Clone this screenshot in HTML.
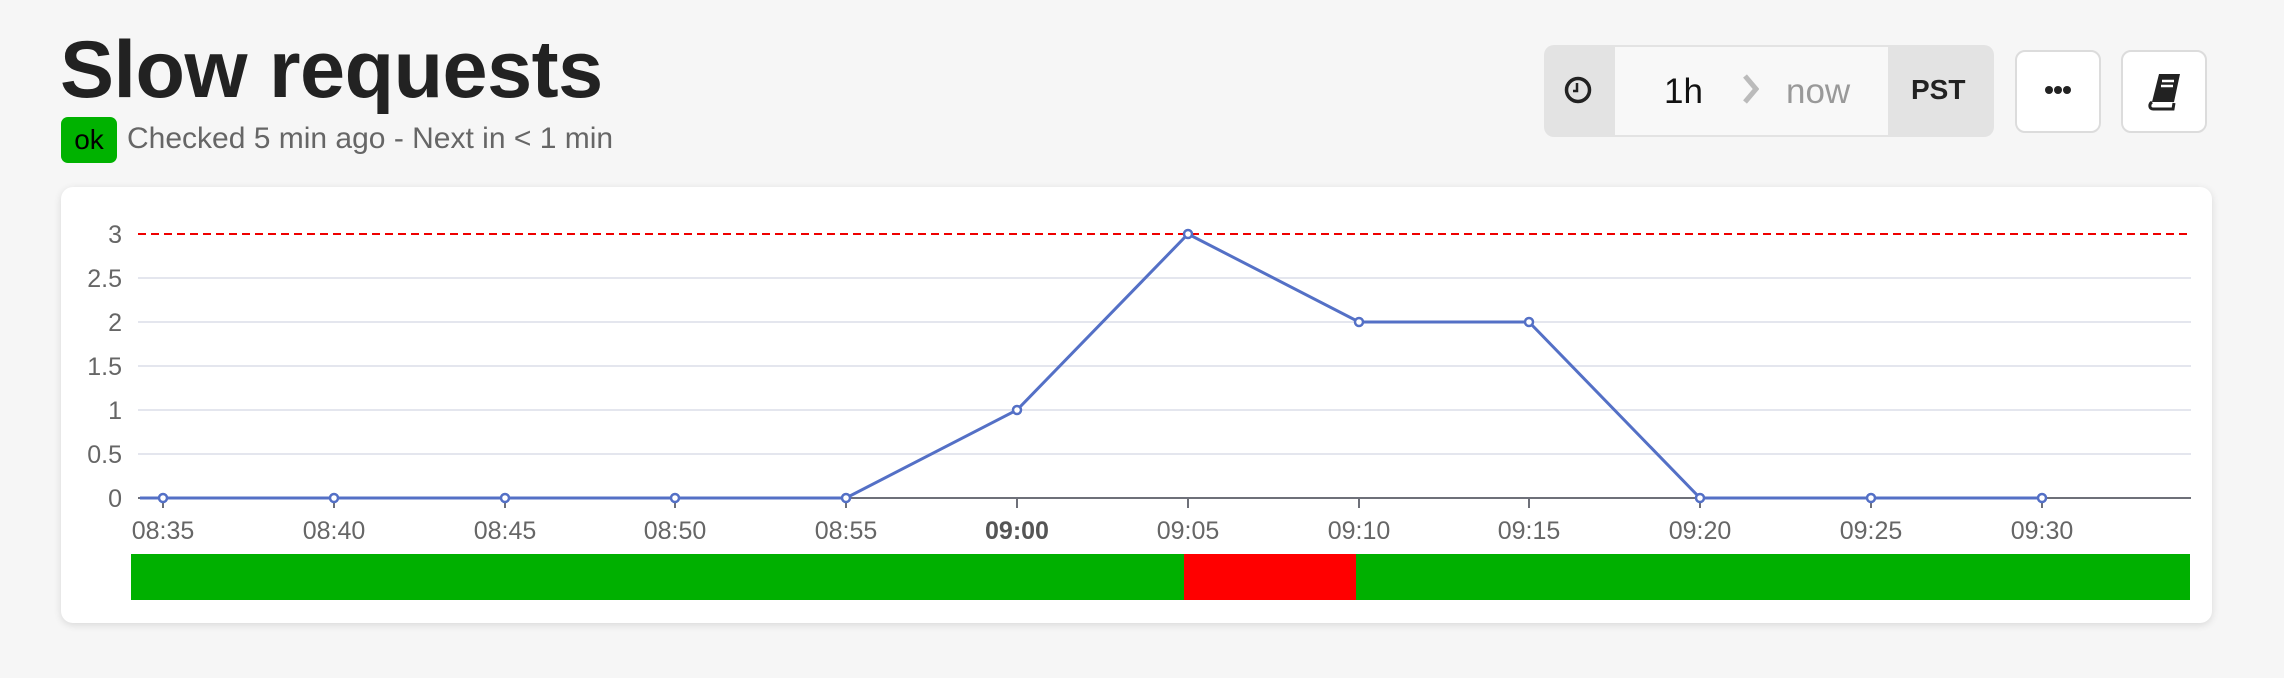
<!DOCTYPE html>
<html><head><meta charset="utf-8"><style>
*{margin:0;padding:0;box-sizing:border-box}
body{width:2284px;height:678px;background:#f6f6f6;font-family:"Liberation Sans",sans-serif;position:relative;overflow:hidden}
.abs{position:absolute}
h1{position:absolute;left:60px;top:30px;font-size:81px;font-weight:bold;color:#222;letter-spacing:-0.5px;line-height:1}
.ok{left:61px;top:117px;width:56px;height:46px;background:#00b200;border-radius:7px;color:#000;font-size:28px;line-height:46px;text-align:center}
.st{left:127px;top:122px;font-size:30px;color:#666;white-space:nowrap}
.card{left:61px;top:187px;width:2151px;height:436px;background:#fff;border-radius:12px;box-shadow:0 2px 8px rgba(0,0,0,.12)}
.grp{left:1544px;top:45px;width:450px;height:92px;background:#e3e3e3;border-radius:10px}
.mid{left:1615px;top:47px;width:273px;height:88px;background:#f8f8f8}
.btn{top:50px;width:86px;height:83px;background:#fff;border:2px solid #dcdcdc;border-radius:10px}
</style></head><body>
<h1>Slow requests</h1>
<div class="abs ok">ok</div>
<div class="abs st">Checked 5 min ago - Next in &lt; 1 min</div>
<div class="abs card"></div>
<div class="abs grp"></div>
<div class="abs mid"></div>
<svg class="abs" style="left:1563px;top:75px" width="30" height="30" viewBox="0 0 30 30"><circle cx="15" cy="15" r="11.5" fill="none" stroke="#222" stroke-width="3.5"/><path d="M14 8v8h-4" fill="none" stroke="#222" stroke-width="2.5"/></svg>
<div class="abs" style="left:1664px;top:72px;font-size:35px;color:#111">1h</div>
<svg class="abs" style="left:1743px;top:74px" width="16" height="30" viewBox="0 0 16 30"><path d="M2 2l11 13-11 13" fill="none" stroke="#bbb" stroke-width="5"/></svg>
<div class="abs" style="left:1786px;top:72px;font-size:35px;color:#999">now</div>
<div class="abs" style="left:1911px;top:74px;font-size:28px;font-weight:bold;color:#222">PST</div>
<div class="abs btn" style="left:2015px"></div>
<div class="abs btn" style="left:2121px"></div>
<svg class="abs" style="left:2044px;top:84px" width="28" height="12"><circle cx="5" cy="6" r="4" fill="#222"/><circle cx="14" cy="6" r="4" fill="#222"/><circle cx="23" cy="6" r="4" fill="#222"/></svg>
<svg class="abs" style="left:2148px;top:72px" width="34" height="40" viewBox="0 0 34 40"><path d="M11 2h21l-6 28H4z" fill="#222"/><path d="M4 30c-3 2-3 7 1 7h20l1-6" fill="none" stroke="#222" stroke-width="3"/><path d="M14 9h12M13 14h12" stroke="#fff" stroke-width="2.5"/></svg>
<svg class="abs" style="left:0;top:0" width="2284" height="678" font-family="Liberation Sans, sans-serif" font-size="25" fill="#666">
<g stroke="#e4e6ee" stroke-width="2"><line x1="138" x2="2191" y1="454" y2="454"/><line x1="138" x2="2191" y1="410" y2="410"/><line x1="138" x2="2191" y1="366" y2="366"/><line x1="138" x2="2191" y1="322" y2="322"/><line x1="138" x2="2191" y1="278" y2="278"/></g>
<line x1="138" x2="2191" y1="234" y2="234" stroke="#e00" stroke-width="2" stroke-dasharray="8,5"/>
<line x1="138" x2="2191" y1="498" y2="498" stroke="#6e7079" stroke-width="2"/>
<g stroke="#6e7079" stroke-width="2">
<line x1="163" x2="163" y1="498" y2="508"/><line x1="334" x2="334" y1="498" y2="508"/><line x1="505" x2="505" y1="498" y2="508"/><line x1="675" x2="675" y1="498" y2="508"/><line x1="846" x2="846" y1="498" y2="508"/><line x1="1017" x2="1017" y1="498" y2="508"/><line x1="1188" x2="1188" y1="498" y2="508"/><line x1="1359" x2="1359" y1="498" y2="508"/><line x1="1529" x2="1529" y1="498" y2="508"/><line x1="1700" x2="1700" y1="498" y2="508"/><line x1="1871" x2="1871" y1="498" y2="508"/><line x1="2042" x2="2042" y1="498" y2="508"/></g>
<g text-anchor="end"><text x="122" y="243">3</text><text x="122" y="287">2.5</text><text x="122" y="331">2</text><text x="122" y="375">1.5</text><text x="122" y="419">1</text><text x="122" y="463">0.5</text><text x="122" y="507">0</text></g>
<g text-anchor="middle"><text x="163" y="539">08:35</text><text x="334" y="539">08:40</text><text x="505" y="539">08:45</text><text x="675" y="539">08:50</text><text x="846" y="539">08:55</text><text x="1017" y="539" font-weight="bold" fill="#555">09:00</text><text x="1188" y="539">09:05</text><text x="1359" y="539">09:10</text><text x="1529" y="539">09:15</text><text x="1700" y="539">09:20</text><text x="1871" y="539">09:25</text><text x="2042" y="539">09:30</text></g>
<polyline points="140,498 163,498 334,498 505,498 675,498 846,498 1017,410 1188,234 1359,322 1529,322 1700,498 1871,498 2042,498" fill="none" stroke="#5470c6" stroke-width="3"/>
<g fill="#fff" stroke="#5470c6" stroke-width="2.5"><circle cx="163" cy="498" r="4"/><circle cx="334" cy="498" r="4"/><circle cx="505" cy="498" r="4"/><circle cx="675" cy="498" r="4"/><circle cx="846" cy="498" r="4"/><circle cx="1017" cy="410" r="4"/><circle cx="1188" cy="234" r="4"/><circle cx="1359" cy="322" r="4"/><circle cx="1529" cy="322" r="4"/><circle cx="1700" cy="498" r="4"/><circle cx="1871" cy="498" r="4"/><circle cx="2042" cy="498" r="4"/></g>
<rect x="131" y="554" width="2059" height="46" fill="#00b000"/>
<rect x="1184" y="554" width="172" height="46" fill="#ff0000"/>
</svg>
</body></html>
